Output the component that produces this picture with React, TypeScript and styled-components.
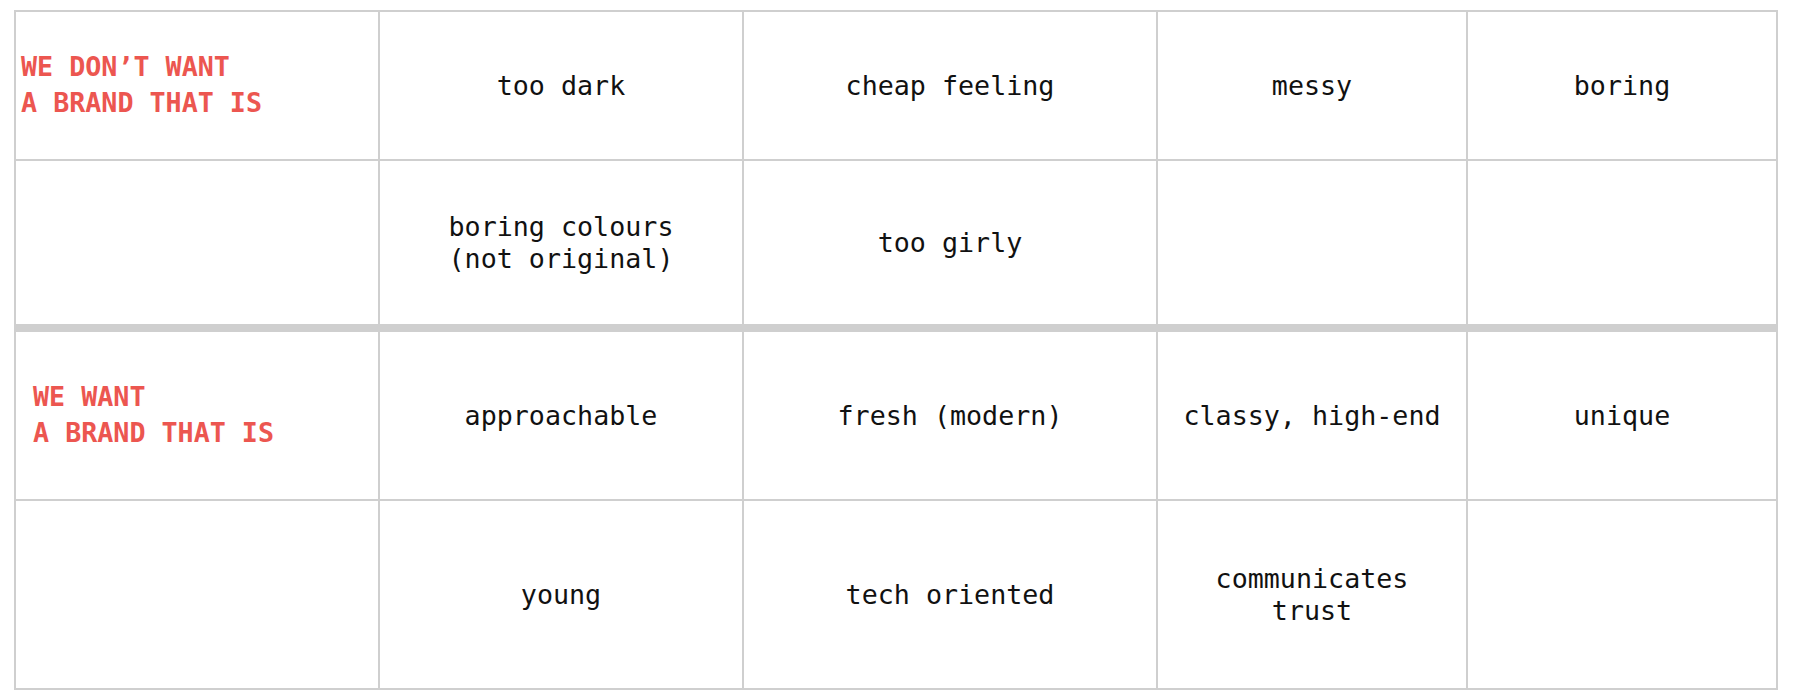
import React from "react";
import styled, { createGlobalStyle } from "styled-components";

const GlobalStyle = createGlobalStyle`
    html, body {
        margin: 0;
        padding: 0;
        background: #fff;
    }
`;

type Group = {
    label: string[];
    indent: number;
    rows: string[][];
    heights: number[];
};

const groups: Group[] = [
    {
        label: ["WE DON’T WANT", "A BRAND THAT IS"],
        indent: 5,
        heights: [147, 163],
        rows: [
            ["too dark", "cheap feeling", "messy", "boring"],
            ["boring colours\n(not original)", "too girly", "", ""],
        ],
    },
    {
        label: ["WE WANT", "A BRAND THAT IS"],
        indent: 17,
        heights: [167, 187],
        rows: [
            ["approachable", "fresh (modern)", "classy, high-end", "unique"],
            ["young", "tech oriented", "communicates\ntrust", ""],
        ],
    },
];

const Board = styled.div`
    display: flex;
    flex-direction: column;
    gap: 8px;
    width: fit-content;
    margin: 10px 0 0 14px;
    padding: 2px;
    background: #cfcfcf;
`;

const Section = styled.section<{ $rows: string }>`
    display: grid;
    grid-template-columns: 362px 362px 412px 308px 308px;
    grid-template-rows: ${(p) => p.$rows};
    gap: 2px;
`;

const Cell = styled.div`
    display: flex;
    align-items: center;
    justify-content: center;
    background: #fff;
    color: #111;
    font-family: "DejaVu Sans Mono", "Liberation Mono", monospace;
    font-size: 26.7px;
    line-height: 32px;
    text-align: center;
    white-space: pre-line;
`;

const Label = styled(Cell)<{ $indent: number }>`
    justify-content: flex-start;
    padding-left: ${(p) => p.$indent}px;
    padding-bottom: 2px;
    color: #ec5650;
    font-weight: 700;
    line-height: 36px;
    text-align: left;
`;

const App = () => {
    return (
        <>
            <GlobalStyle />
            <Board>
                {groups.map((g, gi) => (
                    <Section key={gi} $rows={g.heights.map((h) => h + "px").join(" ")}>
                        {g.rows.map((row, ri) => (
                            <React.Fragment key={ri}>
                                {ri === 0 ? (
                                    <Label $indent={g.indent}>{g.label.join("\n")}</Label>
                                ) : (
                                    <Cell />
                                )}
                                {row.map((text, ci) => (
                                    <Cell key={ci}>{text}</Cell>
                                ))}
                            </React.Fragment>
                        ))}
                    </Section>
                ))}
            </Board>
        </>
    );
};

export default App;
